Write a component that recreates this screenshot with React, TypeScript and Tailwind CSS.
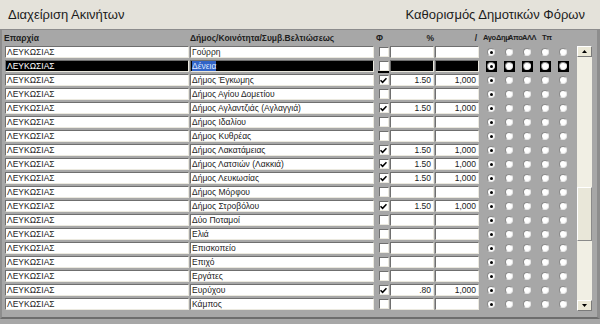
import React from "react";

type Row = { area: string; name: string; on?: boolean; pct?: string; per?: string };

const rows: Row[] = [
  { area: "ΛΕΥΚΩΣΙΑΣ", name: "Γούρρη" },
  { area: "ΛΕΥΚΩΣΙΑΣ", name: "Δένεια" },
  { area: "ΛΕΥΚΩΣΙΑΣ", name: "Δήμος Έγκωμης", on: true, pct: "1.50", per: "1,000" },
  { area: "ΛΕΥΚΩΣΙΑΣ", name: "Δήμος Αγίου Δομετίου" },
  { area: "ΛΕΥΚΩΣΙΑΣ", name: "Δήμος Αγλαντζιάς (Αγλαγγιά)", on: true, pct: "1.50", per: "1,000" },
  { area: "ΛΕΥΚΩΣΙΑΣ", name: "Δήμος Ιδαλίου" },
  { area: "ΛΕΥΚΩΣΙΑΣ", name: "Δήμος Κυθρέας" },
  { area: "ΛΕΥΚΩΣΙΑΣ", name: "Δήμος Λακατάμειας", on: true, pct: "1.50", per: "1,000" },
  { area: "ΛΕΥΚΩΣΙΑΣ", name: "Δήμος Λατσιών (Λακκιά)", on: true, pct: "1.50", per: "1,000" },
  { area: "ΛΕΥΚΩΣΙΑΣ", name: "Δήμος Λευκωσίας", on: true, pct: "1.50", per: "1,000" },
  { area: "ΛΕΥΚΩΣΙΑΣ", name: "Δήμος Μόρφου" },
  { area: "ΛΕΥΚΩΣΙΑΣ", name: "Δήμος Στροβόλου", on: true, pct: "1.50", per: "1,000" },
  { area: "ΛΕΥΚΩΣΙΑΣ", name: "Δύο Ποταμοί" },
  { area: "ΛΕΥΚΩΣΙΑΣ", name: "Ελιά" },
  { area: "ΛΕΥΚΩΣΙΑΣ", name: "Επισκοπείο" },
  { area: "ΛΕΥΚΩΣΙΑΣ", name: "Επιχό" },
  { area: "ΛΕΥΚΩΣΙΑΣ", name: "Εργάτες" },
  { area: "ΛΕΥΚΩΣΙΑΣ", name: "Ευρύχου", on: true, pct: ".80", per: "1,000" },
  { area: "ΛΕΥΚΩΣΙΑΣ", name: "Κάμπος" },
];

const field =
  "h-[12px] border border-t-[#6f6f6f] border-l-[#6f6f6f] border-b-[#ebe9df] border-r-[#ebe9df] leading-[10px] overflow-hidden whitespace-nowrap";

function Radio({ checked, sel }: { checked?: boolean; sel?: boolean }) {
  return (
    <div className="w-[18px] flex justify-center">
      <div className={sel ? "w-[11px] h-[11px] bg-black flex items-center justify-center" : "flex items-center justify-center"}>
        <div className="w-[8px] h-[8px] rounded-full bg-white border border-t-[#8a8a8a] border-l-[#8a8a8a] border-b-[#e6e6e6] border-r-[#e6e6e6] flex items-center justify-center">
          {checked && <div className="w-[3px] h-[3px] rounded-full bg-black" />}
        </div>
      </div>
    </div>
  );
}

function GridRow({ r, sel }: { r: Row; sel: boolean }) {
  return (
    <div className="flex items-center h-[14px]">
      <div className={`${field} w-[184px] pl-[1px] ${sel ? "bg-black text-white" : "bg-white text-[#222]"}`}>{r.area}</div>
      <div className={`${field} w-[184px] ml-[1px] pl-[1px] ${sel ? "bg-black" : "bg-white text-[#222]"}`}>
        {sel ? <span className="bg-[#3163c6] text-[#dfe8ff]">{r.name}</span> : r.name}
      </div>
      <div className="ml-[4px] w-[11px] h-[12px] flex flex-col items-center justify-center">
        <div className="w-[10px] h-[10px] bg-white border border-t-[#6f6f6f] border-l-[#6f6f6f] border-b-[#ebe9df] border-r-[#ebe9df] flex items-center justify-center">
          {r.on && (
            <svg width="7" height="7" viewBox="0 0 7 7">
              <path d="M0.5 3.2 L2.6 5.3 L6.5 1.2" stroke="#000" strokeWidth="1.6" fill="none" />
            </svg>
          )}
        </div>
        {sel && <div className="w-[11px] h-[2px] bg-black -mb-[2px]" />}
      </div>
      <div className={`${field} w-[44px] ml-[1px] pr-[2px] text-right ${sel ? "bg-black" : "bg-white text-[#222]"}`}>{r.pct}</div>
      <div className={`${field} w-[44px] ml-[1px] pr-[2px] text-right ${sel ? "bg-black" : "bg-white text-[#222]"}`}>{r.per}</div>
      <div className="flex ml-[3px]">
        <Radio checked sel={sel} />
        <Radio sel={sel} />
        <Radio sel={sel} />
        <Radio sel={sel} />
        <Radio sel={sel} />
      </div>
    </div>
  );
}

function Arrow({ up }: { up?: boolean }) {
  return (
    <div className="w-[15px] h-[11px] bg-[#ece9d8] border border-t-white border-l-white border-b-[#7a7a7a] border-r-[#7a7a7a] flex items-center justify-center">
      <svg width="5" height="3" viewBox="0 0 5 3">
        <path d={up ? "M0 3 L2.5 0 L5 3 Z" : "M0 0 L5 0 L2.5 3 Z"} fill="#000" />
      </svg>
    </div>
  );
}

export default function App() {
  return (
    <div className="w-[600px] h-[324px] bg-[#a7a7a7] flex flex-col text-[#222] overflow-hidden" style={{ fontFamily: '"Liberation Sans", Arial, sans-serif' }}>
      <div className="h-[30px] bg-[#e4e2da] border-b border-[#8c8c8c] flex items-center justify-between px-[8px] text-[13px] text-[#1c1c1c]">
        <span>Διαχείριση Ακινήτων</span>
        <span className="mr-[7px]">Καθορισμός Δημοτικών Φόρων</span>
      </div>
      <div className="flex-1 flex flex-col border-l-2 border-r-[3px] border-b-2 border-l-[#8d8d8d] border-r-[#8d8d8d] border-b-[#6d6d6d] mb-[5px]">
        <div className="h-[15px] flex items-center text-[8.5px] font-bold text-[#1e1e1e] pt-[1px] whitespace-nowrap">
          <span className="w-[186px] shrink-0 pl-[2px]">Επαρχία</span>
          <span className="w-[188px] shrink-0 pl-[2px]">Δήμος/Κοινότητα/Συμβ.Βελτιώσεως</span>
          <span className="w-[14px] shrink-0">Φ</span>
          <span className="w-[45px] shrink-0 text-right pr-[1px]">%</span>
          <span className="w-[43px] shrink-0 text-right pr-[1px]">/</span>
          <div className="flex ml-[5px] text-[7.5px] tracking-[-0.4px]">
            <span className="w-[13px] shrink-0">Αγο</span>
            <span className="w-[12px] shrink-0">Δημ</span>
            <span className="w-[14px] shrink-0">Απο</span>
            <span className="w-[20px] shrink-0">ΑΛΛ</span>
            <span className="shrink-0">Τπ</span>
          </div>
        </div>
        <div className="flex flex-1">
          <div className="flex flex-col text-[8.5px] pl-[3px]">
            {rows.map((r, i) => (
              <GridRow key={i} r={r} sel={i === 1} />
            ))}
          </div>
          <div className="ml-[5px] mt-[1px] w-[15px] h-[265px] bg-[#f1efe4] flex flex-col">
            <Arrow up />
            <div className="flex-1 flex flex-col">
              <div className="h-[130px]" />
              <div className="h-[54px] bg-[#e9e7d9] border border-t-white border-l-white border-b-[#8a8a8a] border-r-[#8a8a8a]" />
            </div>
            <Arrow />
          </div>
        </div>
      </div>
    </div>
  );
}
